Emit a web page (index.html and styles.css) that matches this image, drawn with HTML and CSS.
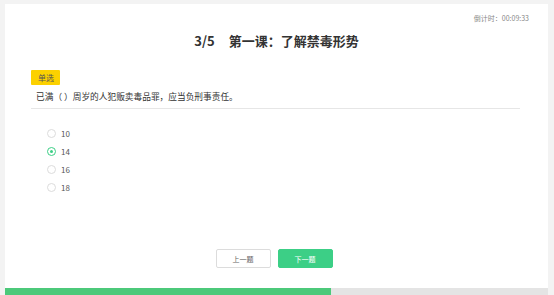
FILE: index.html
```html
<!DOCTYPE html>
<html lang="zh-CN">
<head>
    <meta charset="UTF-8">
    <title>第一课：了解禁毒形势</title>
    <meta name="viewport" content="width=device-width, initial-scale=1.0">
    <link rel="stylesheet" href="styles.css">
</head>
<body>
    <div class="exam-card">
        <div class="timer">倒计时：00:09:33</div>
        <h1 class="title"><span class="num">3/5</span>第一课：了解禁毒形势</h1>

        <div class="question">
            <span class="tag">单选</span>
            <p class="stem">已满（ ）周岁的人犯贩卖毒品罪，应当负刑事责任。</p>
        </div>

        <ul class="options">
            <li><span class="radio"></span>10</li>
            <li><span class="radio checked"></span>14</li>
            <li><span class="radio"></span>16</li>
            <li><span class="radio"></span>18</li>
        </ul>

        <div class="actions">
            <button class="btn">上一题</button>
            <button class="btn primary">下一题</button>
        </div>

        <div class="progress">
            <div class="progress-fill" style="width: 60%"></div>
        </div>
    </div>
</body>
</html>
```

FILE: styles.css
```css
body {
    font-family: "Noto Sans CJK SC", "Noto Sans", sans-serif;
    margin: 0;
    padding: 4px 6px 0 5px;
    background-color: #f3f3f3;
    color: #333;
}
.exam-card {
    background: white;
    height: 291px;
    display: flex;
    flex-direction: column;
}
.timer {
    font-size: 7px;
    line-height: 10px;
    color: #888;
    text-align: right;
    padding: 9px 19px 0;
}
.title {
    margin: 9px 0 0;
    font-size: 13px;
    line-height: 18px;
    font-weight: bold;
    text-align: center;
    color: #333;
}
.title .num {
    margin-right: 14px;
}
.question {
    display: flex;
    flex-direction: column;
    align-items: flex-start;
    margin: 20px 28px 0 26px;
    padding-bottom: 5px;
    border-bottom: 1px solid #e6e6e6;
}
.tag {
    background: #fcd100;
    color: #555;
    font-size: 8px;
    line-height: 15px;
    padding: 0 6px 0 7px;
    border-radius: 1px;
}
.stem {
    margin: 6px 0 0 5px;
    font-size: 8.7px;
    line-height: 12px;
    color: #333;
}
.options {
    list-style: none;
    margin: 15px 0 0;
    padding: 0 0 0 42px;
}
.options li {
    display: flex;
    align-items: center;
    gap: 5px;
    height: 18px;
    font-size: 8px;
    color: #555;
}
.radio {
    width: 7px;
    height: 7px;
    border: 1px solid #dcdcdc;
    border-radius: 50%;
    display: flex;
    align-items: center;
    justify-content: center;
}
.radio.checked {
    border-color: #3ccf86;
}
.radio.checked::after {
    content: "";
    width: 3px;
    height: 3px;
    border-radius: 50%;
    background: #3ccf86;
}
.actions {
    margin-top: auto;
    display: flex;
    justify-content: center;
    gap: 7px;
    padding-right: 5px;
}
.btn {
    width: 55px;
    height: 19px;
    padding: 0;
    border: 1px solid #dcdcdc;
    border-radius: 2px;
    background: white;
    color: #666;
    font-family: inherit;
    font-size: 7px;
    cursor: pointer;
}
.btn.primary {
    background: #3ccf86;
    border-color: #3ccf86;
    color: white;
}
.progress {
    margin-top: 20px;
    height: 7px;
    background: #e4e4e4;
}
.progress-fill {
    height: 100%;
    background: #4cc97a;
}
```
